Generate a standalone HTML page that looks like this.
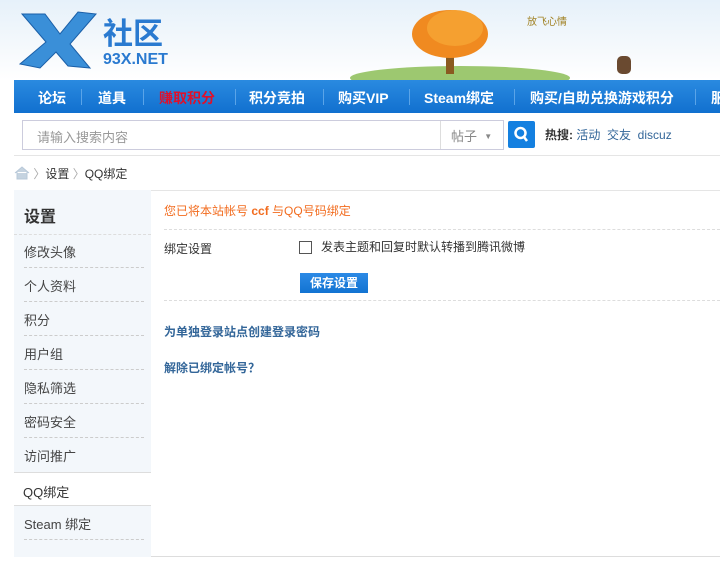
<!DOCTYPE html>
<html><head><meta charset="utf-8">
<style>
*{margin:0;padding:0;box-sizing:border-box}
body{width:720px;height:572px;overflow:hidden;background:#fff;font-family:"Liberation Sans","Noto Sans CJK SC",sans-serif;font-size:12px;color:#333;position:relative}
.hdr{position:absolute;left:0;top:0;width:720px;height:80px;background:linear-gradient(180deg,#e6f1fa 0%,#f5f9fc 60%,#fff 100%)}
.nav{position:absolute;left:14px;top:80px;width:706px;height:33px;background:linear-gradient(#2a8ae0,#1170cf);color:#fff;font-size:14px;font-weight:bold}
.nav span{position:absolute;top:8px;white-space:nowrap}
.nav i{position:absolute;top:9px;width:1px;height:16px;background:#5aa4e8}
.sb{position:absolute;left:14px;top:113px;width:706px;height:43px;background:#fff;border-bottom:1px solid #e5e5e5}
.inp{position:absolute;left:8px;top:7px;width:482px;height:30px;border:1px solid #ccd;background:#fff}
.crumb{position:absolute;left:14px;top:165px;font-size:12px;color:#333}
.side{position:absolute;left:14px;top:190px;width:137px;height:367px;background:#f3f7fb}
.side .t{position:absolute;left:10px;top:13px;font-size:16px;font-weight:bold;color:#333}
.side .it{position:absolute;left:10px;width:120px;font-size:13px;color:#444;border-bottom:1px dashed #ccc;height:34px;padding-top:8px}
.main{position:absolute;left:151px;top:190px;width:569px;height:367px;border-top:1px solid #e5e5e5;border-bottom:1px solid #ddd}
a{color:#336699;font-weight:bold;text-decoration:none}
</style></head><body>
<div class="hdr">
 <svg width="720" height="80" style="position:absolute;left:0;top:0">
  <path d="M22 14 L45 14 L60 34 L78 12 L96 14 L70 44 L90 68 L68 66 L56 52 L40 68 L20 64 L46 42 Z" fill="#3a8fd8" stroke="#1a5fa8"/>
  <text x="103" y="44" font-size="30" font-weight="bold" fill="#2a7ad0" font-family="Noto Sans CJK SC">社区</text>
  <text x="103" y="64" font-size="16" font-weight="bold" fill="#2a7ad0">93X.NET</text>
  <ellipse cx="460" cy="78" rx="110" ry="12" fill="#9dc870"/>
  <rect x="446" y="42" width="8" height="32" fill="#8a5a20"/>
  <ellipse cx="450" cy="34" rx="38" ry="24" fill="#f08a20"/>
  <ellipse cx="455" cy="28" rx="28" ry="18" fill="#f5a030"/>
  <text x="527" y="25" font-size="10" fill="#a08020" font-family="Noto Sans CJK SC">放飞心情</text>
  <rect x="617" y="56" width="14" height="18" rx="5" fill="#6a4a30"/>
 </svg>
</div>
<div class="nav">
 <span style="left:24px">论坛</span><i style="left:67px"></i>
 <span style="left:84px">道具</span><i style="left:129px"></i>
 <span style="left:145px;color:#e0102a">赚取积分</span><i style="left:221px"></i>
 <span style="left:235px">积分竞拍</span><i style="left:309px"></i>
 <span style="left:324px">购买VIP</span><i style="left:395px"></i>
 <span style="left:410px">Steam绑定</span><i style="left:500px"></i>
 <span style="left:516px">购买/自助兑换游戏积分</span><i style="left:681px"></i>
 <span style="left:697px">服</span>
</div>
<div class="sb">
 <div class="inp"><span style="position:absolute;left:14px;top:6px;color:#999;font-size:13px">请输入搜索内容</span>
 <div style="position:absolute;left:417px;top:0;width:1px;height:28px;background:#ddd"></div>
 <span style="position:absolute;left:428px;top:5px;color:#888;font-size:13px;white-space:nowrap">帖子 &nbsp;<span style="font-size:8px;vertical-align:2px">▼</span></span></div>
 <div style="position:absolute;left:494px;top:8px;width:27px;height:27px;background:#1480e0;border-radius:2px">
  <svg width="27" height="27"><circle cx="12.5" cy="12" r="5" fill="none" stroke="#fff" stroke-width="2.5"/><line x1="16" y1="16" x2="19" y2="20" stroke="#fff" stroke-width="2.5"/></svg></div>
 <span style="position:absolute;left:531px;top:13px;font-size:12px;white-space:nowrap"><b>热搜:</b> <span style="color:#336699">活动&nbsp; 交友&nbsp; discuz</span></span>
</div>
<div class="crumb"><svg width="16" height="14" style="vertical-align:-2px"><path d="M1 7 L8 1 L15 7 M3 6 V13 H13 V6" fill="#c5d3e0" stroke="#b8c8d8"/></svg> <span style="color:#aaa">〉</span>设置 <span style="color:#aaa">〉</span>QQ绑定</div>
<div class="side">
 <div class="t">设置</div>
 <div style="position:absolute;left:0;top:44px;width:137px;border-top:1px dashed #ddd"></div>
 <div class="it" style="top:44px">修改头像</div>
 <div class="it" style="top:78px">个人资料</div>
 <div class="it" style="top:112px">积分</div>
 <div class="it" style="top:146px">用户组</div>
 <div class="it" style="top:180px">隐私筛选</div>
 <div class="it" style="top:214px">密码安全</div>
 <div class="it" style="top:248px;border:none">访问推广</div>
 <div style="position:absolute;left:0;top:282px;width:137px;height:34px;background:#fff;border-top:1px solid #ddd;border-bottom:1px solid #ddd;font-size:13px;padding:9px 0 0 9px">QQ绑定</div>
 <div class="it" style="top:316px">Steam 绑定</div>
</div>
<div class="main">
 <div style="position:absolute;left:13px;top:11px;color:#f26c1f;font-size:12px">您已将本站帐号 <b>ccf</b> 与QQ号码绑定</div>
 <div style="position:absolute;left:13px;top:38px;width:556px;border-top:1px dashed #ddd"></div>
 <div style="position:absolute;left:13px;top:49px">绑定设置</div>
 <div style="position:absolute;left:148px;top:50px;width:13px;height:13px;border:1px solid #555"></div>
 <div style="position:absolute;left:170px;top:47px">发表主题和回复时默认转播到腾讯微博</div>
 <div style="position:absolute;left:149px;top:82px;width:68px;height:20px;background:linear-gradient(#2c8ae6,#1273d2);color:#fff;font-weight:bold;text-align:center;line-height:20px">保存设置</div>
 <div style="position:absolute;left:13px;top:109px;width:556px;border-top:1px dashed #ddd"></div>
 <a style="position:absolute;left:13px;top:132px">为单独登录站点创建登录密码</a>
 <a style="position:absolute;left:13px;top:168px">解除已绑定帐号？</a>
</div>
</body></html>
